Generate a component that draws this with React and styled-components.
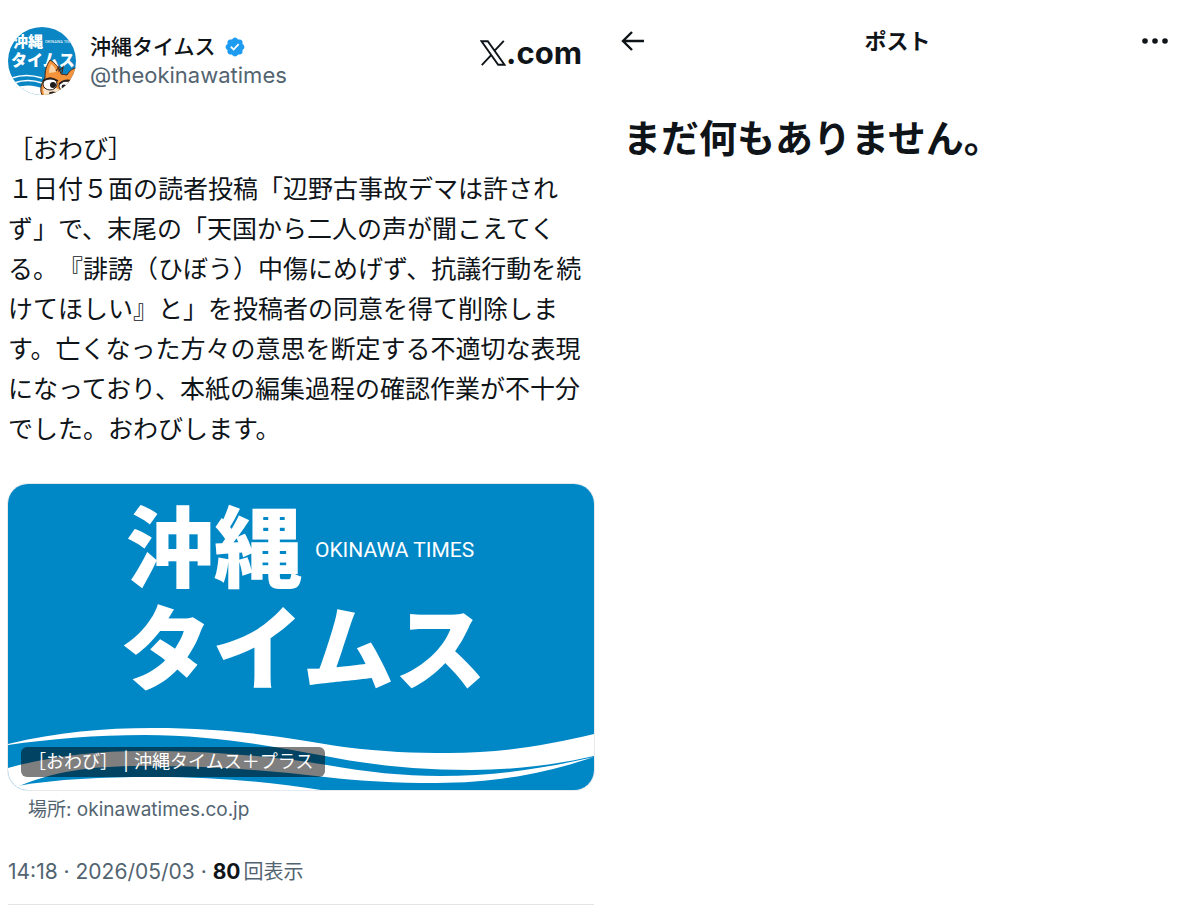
import React from 'react';
import styled, { createGlobalStyle } from 'styled-components';

function App() {
  return (
    <>
      <GlobalStyle />
      <Page lang="ja">
        <Post>
          <PostHeader>
            <Avatar />
            <Account>
              <Name href="#profile">
                沖縄タイムス
                <VerifiedBadge />
              </Name>
              <Handle href="#profile">@theokinawatimes</Handle>
            </Account>
            <SiteLink href="#home" aria-label="X.com">
              <XMark />
              .com
            </SiteLink>
          </PostHeader>

          <Body>
            ［おわび］
            <br />
            １日付５面の読者投稿「辺野古事故デマは許されず」で、末尾の「天国から二人の声が聞こえてくる。『誹謗（ひぼう）中傷にめげず、抗議行動を続けてほしい』と」を投稿者の同意を得て削除します。亡くなった方々の意思を断定する不適切な表現になっており、本紙の編集過程の確認作業が不十分でした。おわびします。
          </Body>

          <LinkCard href="#article">
            <CardArt />
            <Caption>［おわび］ | 沖縄タイムス＋プラス</Caption>
          </LinkCard>
          <Source href="#article">場所: okinawatimes.co.jp</Source>

          <Meta>
            <time dateTime="2026-05-03T14:18">14:18 · 2026/05/03</time> ·{' '}
            <strong>80</strong>
            <Unit>回表示</Unit>
          </Meta>
        </Post>

        <Detail>
          <TopBar>
            <IconButton type="button" aria-label="戻る">
              <svg width="24" height="22" viewBox="0 0 24 22" fill="none">
                <path
                  d="M11 2L2 11l9 9M2.500 11H23"
                  stroke="#0f1419"
                  strokeWidth="2.400"
                />
              </svg>
            </IconButton>
            <Title>ポスト</Title>
            <IconButton type="button" aria-label="もっと見る" $end>
              <svg width="26" height="6" viewBox="0 0 26 6" fill="#0f1419">
                <circle cx="3" cy="3" r="2.800" />
                <circle cx="13" cy="3" r="2.800" />
                <circle cx="23" cy="3" r="2.800" />
              </svg>
            </IconButton>
          </TopBar>
          <Empty>まだ何もありません。</Empty>
        </Detail>
      </Page>
    </>
  );
}

export default App;

function Avatar() {
  return (
    <AvatarSvg viewBox="0 0 68 68" role="img" aria-label="沖縄タイムス">
      <defs>
        <clipPath id="avatarClip">
          <circle cx="34" cy="34" r="34" />
        </clipPath>
      </defs>
      <g clipPath="url(#avatarClip)">
        <rect width="68" height="68" fill="#0a86c4" />
        <LogoText x="5" y="20" $size={15}>
          沖縄
        </LogoText>
        <LogoLatin x="37" y="16" $size={4}>
          OKINAWA TIMES
        </LogoLatin>
        <LogoText x="3" y="39" $size={16}>
          タイムス
        </LogoText>
        <path
          d="M4 51q14-5 30 0M6 56q14-5 28 0M10 61q12-4 26 2"
          stroke="#fff"
          strokeWidth="1.600"
          fill="none"
        />
        <path d="M0 61q16-4 34 1v7H0z" fill="#fff" />
        {/* mascot */}
        <path
          d="M37 51c0-7 1-12 5-18 5 3 9 7 11 14l6 1c2-3 4-6 9-7v28H35c-4-4-2-13 2-18z"
          fill="#f4933b"
          stroke="#4a2a18"
          strokeWidth="1"
        />
        <path d="M41 46c0-4 1-7 2-9 3 2 5 5 5 8z" fill="#fbd3a4" />
        <path
          d="M48 44l3-4v4l4-4-1 6"
          stroke="#4a2a18"
          strokeWidth="1.200"
          fill="none"
        />
        <path d="M35 62q8-5 15 0l6 3-2 3H36z" fill="#fbe5cb" />
        <ellipse cx="42" cy="57" rx="7" ry="6" fill="#fff" stroke="#2a211c" />
        <ellipse cx="57" cy="59" rx="6" ry="5" fill="#fff" stroke="#2a211c" />
        <path
          d="M35 54q7-5 15 0M51 57q6-5 12-3"
          stroke="#2a211c"
          strokeWidth="1.800"
          fill="none"
        />
        <circle cx="45" cy="58" r="3" fill="#1c1a1a" />
        <circle cx="56" cy="60" r="2.400" fill="#1c1a1a" />
        <ellipse cx="45" cy="66" rx="4" ry="1.600" fill="#2a211c" />
      </g>
    </AvatarSvg>
  );
}

function VerifiedBadge() {
  return (
    <svg width="22" height="22" viewBox="0 0 22 22" aria-label="認証済み">
      <path
        fill="#1d9bf0"
        d="M20.396 11c-.018-.646-.215-1.275-.57-1.816-.354-.54-.852-.972-1.438-1.246.223-.607.27-1.264.14-1.897-.131-.634-.437-1.218-.882-1.687-.47-.445-1.053-.75-1.687-.882-.633-.13-1.29-.083-1.897.14-.273-.587-.704-1.086-1.245-1.44S11.647 1.62 11 1.604c-.646.017-1.273.213-1.813.568s-.969.854-1.24 1.44c-.608-.223-1.267-.272-1.902-.14-.635.13-1.22.436-1.69.882-.445.47-.749 1.055-.878 1.688-.13.633-.08 1.29.144 1.896-.587.274-1.087.705-1.443 1.245-.356.54-.555 1.17-.574 1.817.02.647.218 1.276.574 1.817.356.54.856.972 1.443 1.245-.224.606-.274 1.263-.144 1.896.13.634.433 1.218.877 1.688.47.443 1.054.747 1.687.878.633.132 1.29.084 1.897-.136.274.586.705 1.084 1.246 1.439.54.354 1.17.551 1.816.569.647-.016 1.276-.213 1.817-.567s.972-.854 1.245-1.44c.604.239 1.266.296 1.903.164.636-.132 1.22-.447 1.68-.907.46-.46.776-1.044.908-1.681s.075-1.299-.165-1.903c.586-.274 1.084-.705 1.439-1.246.354-.54.551-1.17.569-1.816zM9.662 14.85l-3.429-3.428 1.293-1.302 2.072 2.072 4.4-4.794 1.347 1.246z"
      />
    </svg>
  );
}

function XMark() {
  return (
    <svg width="26" height="26" viewBox="0 0 26 26" fill="none">
      <path
        d="M1.500 1.200h6.300L24.500 24.800h-6.300zM23.800 .8L14 11.300M1.800 25.200l9.800-10.500"
        stroke="#0f1419"
        strokeWidth="1.900"
      />
    </svg>
  );
}

function CardArt() {
  return (
    <ArtSvg viewBox="0 0 586 306" role="img" aria-label="沖縄タイムス">
      <rect width="586" height="306" fill="#0087c6" />
      <LogoText x="118" y="96" $size={88}>
        沖縄
      </LogoText>
      <LogoLatin x="307" y="73" $size={21}>
        OKINAWA TIMES
      </LogoLatin>
      <LogoText x="112" y="199" $size={92}>
        タイムス
      </LogoText>
      <g fill="#fff">
        <path d="M0 260C50 248 95 244 145 244c85 0 140 11 191 19 40 5 70 6 104 6 55 0 100-8 146-19v22c-40 9-80 14-123 14-55 0-100-5-146-14-50-9-110-21-180-21-50 0-95 4-137 10z" />
        <path d="M0 284C40 273 85 267 134 267c75 0 135 6 185 14 40 7 75 11 113 11 60 0 110-9 154-19-45 15-95 26-158 26-40 0-75-2-111-6-60-7-110-11-183-11-55 0-90 6-125 21L0 306z" />
        <path d="M0 306l9-4c40-7 85-9 136-9 65 0 115 5 168 13z" />
      </g>
    </ArtSvg>
  );
}

const GlobalStyle = createGlobalStyle`
  * {
    box-sizing: border-box;
  }

  body {
    margin: 0;
    background: #fff;
    color: #0f1419;
    font-family: Inter, 'Noto Sans CJK JP', sans-serif;
  }

  a {
    color: inherit;
    text-decoration: none;
  }

  svg {
    flex-shrink: 0;
  }
`;

const Page = styled.div`
  display: grid;
  grid-template-columns: repeat(2, minmax(0, 1fr));
`;

const Post = styled.article`
  padding: 27px 6px 0 8px;
`;

const PostHeader = styled.header`
  display: flex;
  align-items: center;
  gap: 14px;
  padding-right: 12px;
`;

const AvatarSvg = styled.svg`
  width: 68px;
  height: 68px;
`;

const Account = styled.div`
  display: flex;
  flex: 1;
  flex-direction: column;
  min-width: 0;
  line-height: 28px;
`;

const Name = styled.a`
  display: flex;
  align-items: center;
  gap: 8px;
  font-size: 21px;
  font-weight: 500;
`;

const Handle = styled.a`
  color: #536471;
  font-size: 22px;
`;

const SiteLink = styled.a`
  display: flex;
  align-items: center;
  align-self: flex-start;
  padding-top: 8px;
  font-size: 31px;
  font-weight: 700;
  line-height: 36px;
`;

const Body = styled.p`
  margin: 32px 0 37px;
  font-family: 'Noto Sans CJK JP', sans-serif;
  font-size: 25px;
  line-height: 40px;
  text-spacing-trim: space-all;
`;

const LinkCard = styled.a`
  position: relative;
  display: block;
  overflow: hidden;
  border-radius: 20px;
  box-shadow: 0 0 0 1px #e6eaec;
`;

const ArtSvg = styled.svg`
  display: block;
  width: 100%;
`;

const LogoText = styled.text`
  fill: #fff;
  font-family: 'Noto Sans CJK JP', sans-serif;
  font-size: ${({ $size }) => $size}px;
  font-weight: 900;
`;

const LogoLatin = styled.text`
  fill: #fff;
  font-family: Roboto, sans-serif;
  font-size: ${({ $size }) => $size}px;
`;

const Caption = styled.span`
  position: absolute;
  bottom: 13px;
  left: 13px;
  padding: 0 12px 0 7px;
  border-radius: 6px;
  background: rgba(0, 0, 0, 0.5);
  color: #fff;
  font-size: 18px;
  line-height: 30px;
  text-spacing-trim: space-all;
`;

const Source = styled.a`
  display: block;
  margin-top: 6px;
  padding-left: 20px;
  color: #536471;
  font-size: 19px;
  line-height: 28px;
`;

const Meta = styled.div`
  margin-top: 34px;
  padding-bottom: 18px;
  border-bottom: 1px solid #e1e5e8;
  color: #536471;
  font-size: 21px;
  line-height: 28px;

  strong {
    color: #0f1419;
    font-weight: 700;
  }
`;

const Unit = styled.span`
  margin-left: 3px;
  font-size: 20px;
`;

const Detail = styled.main`
  padding: 24px 32px 0 21px;
`;

const TopBar = styled.header`
  display: grid;
  grid-template-columns: 1fr auto 1fr;
  align-items: center;
  height: 34px;
`;

const IconButton = styled.button`
  display: flex;
  justify-self: ${({ $end }) => ($end ? 'end' : 'start')};
  padding: 0;
  border: 0;
  background: none;
  cursor: pointer;
`;

const Title = styled.h1`
  margin: 0;
  padding-left: 6px;
  font-size: 22px;
  font-weight: 700;
  line-height: 28px;
`;

const Empty = styled.h2`
  margin: 52px 0 0 2px;
  font-size: 38px;
  font-weight: 700;
  line-height: 56px;
`;
